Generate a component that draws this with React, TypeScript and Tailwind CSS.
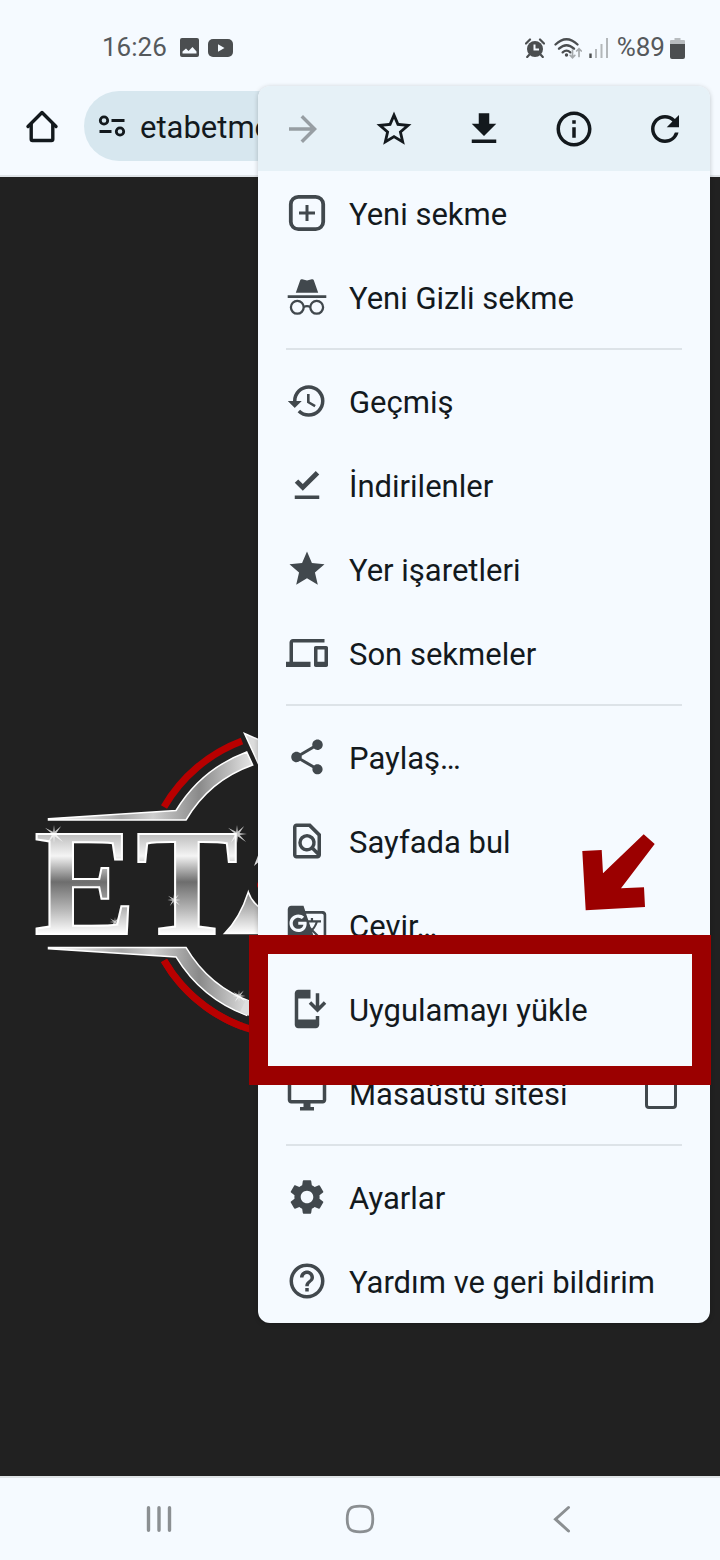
import type { ReactNode } from 'react';
import {
  MdArrowForward,
  MdDevices,
  MdGTranslate,
  MdHelpOutline,
  MdHistory,
  MdInfoOutline,
  MdInstallMobile,
  MdOutlineDesktopWindows,
  MdOutlineFindInPage,
  MdRefresh,
  MdSettings,
  MdShare,
  MdStar,
  MdStarBorder,
} from 'react-icons/md';

function DownloadIcon() {
  return (
    <svg viewBox="0 0 24 24" className="size-[42px]" fill="currentColor">
      <path d="M19 9h-4V3H9v6H5l7 7 7-7zM5 18v2h14v-2H5z" />
    </svg>
  );
}

function DownloadDoneIcon() {
  return (
    <svg viewBox="0 0 24 24" className="size-[42px]" fill="currentColor">
      <path d="M5 18h14v2H5v-2zm4.6-2.7L5 10.7l2-1.9 2.6 2.6L17 4l2 2-9.4 9.3z" />
    </svg>
  );
}

function NewTabIcon() {
  return (
    <svg viewBox="0 0 42 42" className="size-[42px]" fill="none" stroke="currentColor">
      <rect x="4.8" y="4.8" width="32.4" height="32.4" rx="7.5" strokeWidth="3.8" />
      <path d="M21 13v16M13 21h16" strokeWidth="3" />
    </svg>
  );
}

function IncognitoIcon() {
  return (
    <svg viewBox="0 0 42 42" className="size-[42px]" fill="none" stroke="currentColor">
      <path d="M9.8 16.8 14.2 4.3q.5-1.4 2-1l4.8 1.3 4.8-1.3q1.5-.4 2 1l4.4 12.5z" fill="currentColor" stroke="none" />
      <path d="M1.7 20.6h38.6" strokeWidth="2.8" />
      <circle cx="11.3" cy="31.3" r="6.4" strokeWidth="2.3" />
      <circle cx="30.7" cy="31.3" r="6.4" strokeWidth="2.3" />
      <path d="M17.5 31q3.5-1.6 7 0" strokeWidth="2.3" />
    </svg>
  );
}

const toolbar: { label: string; icon: ReactNode; disabled?: boolean }[] = [
  { label: 'İleri', icon: <MdArrowForward size={42} />, disabled: true },
  { label: 'Yer işareti ekle', icon: <MdStarBorder size={42} /> },
  { label: 'İndir', icon: <DownloadIcon /> },
  { label: 'Sayfa bilgisi', icon: <MdInfoOutline size={42} /> },
  { label: 'Yenile', icon: <MdRefresh size={42} /> },
];

type Item = { label: string; icon: ReactNode; checkbox?: boolean; highlighted?: boolean };

const groups: Item[][] = [
  [
    { label: 'Yeni sekme', icon: <NewTabIcon /> },
    { label: 'Yeni Gizli sekme', icon: <IncognitoIcon /> },
  ],
  [
    { label: 'Geçmiş', icon: <MdHistory size={42} /> },
    { label: 'İndirilenler', icon: <DownloadDoneIcon /> },
    { label: 'Yer işaretleri', icon: <MdStar size={42} /> },
    { label: 'Son sekmeler', icon: <MdDevices size={42} /> },
  ],
  [
    { label: 'Paylaş…', icon: <MdShare size={42} /> },
    { label: 'Sayfada bul', icon: <MdOutlineFindInPage size={42} /> },
    { label: 'Çevir…', icon: <MdGTranslate size={42} /> },
    { label: 'Uygulamayı yükle', icon: <MdInstallMobile size={42} />, highlighted: true },
    { label: 'Masaüstü sitesi', icon: <MdOutlineDesktopWindows size={42} />, checkbox: true },
  ],
  [
    { label: 'Ayarlar', icon: <MdSettings size={42} /> },
    { label: 'Yardım ve geri bildirim', icon: <MdHelpOutline size={42} /> },
  ],
];

function Highlight() {
  return (
    <div className="pointer-events-none absolute -top-8 -right-px -bottom-[34px] -left-[9px] z-10 border-[19px] border-[#9b0000]">
      <svg viewBox="582 834 74 78" className="absolute right-9 bottom-full mb-[42px] h-[78px] w-[74px]" fill="#9b0000">
        <path d="M643.7 834.3 654.7 844 621 888.3 644 887.3 645 907 585.7 910.3 582.3 851 601.7 850 603 873.3z" />
      </svg>
    </div>
  );
}

function MenuRow({ item }: { item: Item }) {
  const row = 'flex h-[84px] w-full items-center gap-[21px] px-7 text-left';
  const content = (
    <>
      <span className="shrink-0 text-[#41484d]">{item.icon}</span>
      <span className="flex-1 pt-1 whitespace-nowrap">{item.label}</span>
    </>
  );

  return (
    <li className="relative">
      {item.checkbox ? (
        <label className={row}>
          {content}
          <input type="checkbox" className="mr-[5px] size-8 appearance-none rounded-sm border-3 border-[#41484d]" />
        </label>
      ) : (
        <button type="button" className={row}>
          {content}
        </button>
      )}
      {item.highlighted && <Highlight />}
    </li>
  );
}

function Menu() {
  return (
    <div className="absolute top-[86px] right-2.5 w-[452px] rounded-xl bg-[#f5faff] text-[31px] text-[#13191d] shadow-[0_1px_5px_rgba(0,0,0,0.22)]">
      <div className="grid h-[85px] grid-cols-5 rounded-t-xl bg-[#e6f1f7]">
        {toolbar.map((action) => (
          <button
            key={action.label}
            type="button"
            aria-label={action.label}
            disabled={action.disabled}
            className="flex items-center justify-center disabled:text-[#979ea3]"
          >
            {action.icon}
          </button>
        ))}
      </div>
      {groups.map((group, i) => (
        <div key={i}>
          {i > 0 && <hr className="mx-7 my-[9px] border-t-2 border-[#dde3e8]" />}
          <ul>
            {group.map((item) => (
              <MenuRow key={item.label} item={item} />
            ))}
          </ul>
        </div>
      ))}
    </div>
  );
}

function StatusBar() {
  return (
    <div className="flex h-[91px] items-center pt-1 pr-[35px] pl-[102px] text-[26px] text-[#55595c]">
      <span>16:26</span>
      <svg viewBox="0 0 19 19" className="ml-[13px] size-[19px]">
        <rect width="19" height="19" rx="2" fill="#4b4e50" />
        <path d="M2.5 15.5v-2l3.5-3 2.5 2.5L12.500 9l4 4.500v2z" fill="#f5faff" />
      </svg>
      <svg viewBox="0 0 25 18" className="ml-[9px] h-[18px] w-[25px]">
        <rect width="25" height="18" rx="5" fill="#4b4e50" />
        <path d="M10 5.3 16.5 9 10 12.7z" fill="#f5faff" />
      </svg>

      <div className="ml-auto flex items-center">
        <svg viewBox="0 0 20 20" className="size-5" fill="#4b4e50">
          <circle cx="10" cy="11" r="8" />
          <path d="M1 5.5 5 1.5M19 5.5 15 1.5M4 17l-1.800 2M16 17l1.800 2" stroke="#4b4e50" strokeWidth="2.2" strokeLinecap="round" />
          <path d="M9.5 6.5v5h4.5" fill="none" stroke="#f5faff" strokeWidth="2" />
        </svg>
        <svg viewBox="0 0 28 22" className="ml-[9px] h-[22px] w-7" fill="none" strokeLinecap="round">
          <path d="M1.5 7.5q11-10.5 22 0M5 11.700q7.500-7 15 0M8.700 15.400q3.800-3.500 7.600 0" stroke="#4b4e50" strokeWidth="2.3" />
          <circle cx="12.5" cy="18" r="1.7" fill="#4b4e50" />
          <path d="M18.5 13v7.500M16.200 18.400l2.300 2.300 2.300-2.300M25 19.500V12M22.700 14l2.300-2.300 2.300 2.300" stroke="#a6aaad" strokeWidth="1.7" />
        </svg>
        <svg viewBox="0 0 19 20" className="ml-[7px] h-5 w-[19px]">
          <path d="M1.5 20v-4.500" stroke="#4b4e50" strokeWidth="2.4" />
          <path d="M7 20V11M12.500 20V6M18 20V0" stroke="#b3b7ba" strokeWidth="2" />
        </svg>
        <span className="ml-[9px]">%89</span>
        <svg viewBox="0 0 15 22" className="ml-[5px] h-[22px] w-[15px]">
          <path d="M4.5 1h6v2H14q1 0 1 1v4H0V4q0-1 1-1h3.500z" fill="#b8bcbf" />
          <path d="M0 7h15v13q0 2-2 2H2q-2 0-2-2z" fill="#4b4e50" />
        </svg>
      </div>
    </div>
  );
}

function AddressBar() {
  return (
    <div className="flex h-[84px] items-start pr-6 pl-[22px] text-[#13191d]">
      <button type="button" aria-label="Ana sayfa" className="mt-[15px] shrink-0">
        <svg viewBox="0 0 40 40" className="size-10" fill="none" stroke="currentColor" strokeWidth="3.4" strokeLinejoin="round">
          <path d="M6 20.5 20 6.500 34 20.500" strokeLinecap="round" />
          <path d="M9.2 18v15.200q0 1.300 1.300 1.300h19q1.300 0 1.300-1.300V18" />
        </svg>
      </button>
      <div className="ml-[22px] flex h-[70px] flex-1 items-center gap-[13px] rounded-full bg-[#d7e7ef] pl-3.5">
        <svg viewBox="0 0 29 24" className="h-6 w-[29px] shrink-0" fill="none" stroke="currentColor" strokeWidth="2.8">
          <circle cx="6" cy="6.5" r="3.7" />
          <path d="M13.5 6.5h13M1.5 17.5h12" />
          <circle cx="22" cy="17.5" r="3.7" />
        </svg>
        <input
          type="text"
          aria-label="Adres"
          defaultValue="etabetmo"
          className="min-w-0 flex-1 bg-transparent pt-1 text-[31px] outline-none"
        />
      </div>
    </div>
  );
}

function Sparkle({ x, y, r }: { x: number; y: number; r: number }) {
  return (
    <g transform={`translate(${x} ${y}) scale(${r})`} fill="#fff" opacity="0.75">
      <path d="M0-.2.8-.9.2 0 1 .9 0 .2-.7 1-.2 0-1-.7z" />
      <path d="M-1.1 0 0-.15 1.1 0 0 .15zM0-1 .12 0 0 1-.12 0z" />
    </g>
  );
}

function Wing() {
  return (
    <>
      <path
        d="M48.5 818.7 176 810.5A140.5 140.5 0 0 1 246.7 752L252.700 765A126 126 0 0 0 186 820H48.500z"
        fill="url(#wing)"
        stroke="#fff"
        strokeWidth="1.5"
      />
      <path d="M164 807A152 152 0 0 1 242 741" fill="none" stroke="#b80000" strokeWidth="7" />
    </>
  );
}

function Logo() {
  return (
    <svg viewBox="0 725 720 320" className="w-full">
      <defs>
        <linearGradient id="metal" gradientUnits="userSpaceOnUse" x1="0" y1="834" x2="0" y2="934">
          <stop offset="0" stopColor="#bdbdbd" />
          <stop offset="0.22" stopColor="#f4f4f4" />
          <stop offset="0.48" stopColor="#6d6d6d" />
          <stop offset="0.75" stopColor="#b5b5b5" />
          <stop offset="1" stopColor="#ffffff" />
        </linearGradient>
        <linearGradient id="wing" gradientUnits="userSpaceOnUse" x1="48" y1="0" x2="258" y2="0">
          <stop offset="0" stopColor="#ffffff" />
          <stop offset="0.35" stopColor="#a8a8a8" />
          <stop offset="0.5" stopColor="#cfcfcf" />
          <stop offset="0.72" stopColor="#8a8a8a" />
          <stop offset="1" stopColor="#efefef" />
        </linearGradient>
      </defs>
      <Wing />
      <path d="M244.5 733.5 264 742v34z" fill="#dcdcdc" stroke="#fff" strokeWidth="1.5" />
      <g transform="translate(0 1767.4) scale(1 -1)">
        <Wing />
        <path d="M164 807A152 152 0 0 1 262 735" fill="none" stroke="#b80000" strokeWidth="7" />
        <path d="M240 755.5 262 746v15L246 768z" fill="#dedede" />
      </g>
      <g
        fontFamily="Liberation Serif, serif"
        fontWeight="700"
        fontSize="153"
        fill="url(#metal)"
        stroke="#fff"
        strokeWidth="2"
      >
        <text x="34" y="934">E</text>
        <text x="136" y="934">T</text>
      </g>
      {/* left points of the star that stands between the letters */}
      <path d="M224.5 933.5Q240 918 248.3 892 252 903 262 909v24.500z" fill="url(#metal)" stroke="#fff" strokeWidth="1.5" />
      <path d="M254 866 262 845v14z" fill="#eee" />
      <circle cx="262" cy="885" r="5" fill="#b80000" />
      <Sparkle x={54} y={834} r={9} />
      <Sparkle x={237} y={834} r={9} />
      <Sparkle x={174} y={900} r={6} />
      <Sparkle x={115} y={922} r={5} />
      <Sparkle x={239} y={996} r={6} />
    </svg>
  );
}

function NavBar() {
  return (
    <nav className="grid h-[84px] grid-cols-3 border-t-2 border-[#dfe4e6] px-[58px] text-[#8b8f92]">
      <button type="button" aria-label="Son uygulamalar" className="flex items-center justify-center">
        <svg viewBox="0 0 28 30" className="h-[30px] w-7" stroke="currentColor" strokeWidth="3.4" strokeLinecap="round">
          <path d="M3.5 3.7v22.600M14 3.700v22.600M24.500 3.700v22.600" />
        </svg>
      </button>
      <button type="button" aria-label="Ana ekran" className="flex items-center justify-center">
        <svg viewBox="0 0 30 30" className="size-[30px]" fill="none" stroke="currentColor" strokeWidth="2.8">
          <path d="M15 2.2c9.500 0 12.800 2.300 12.800 12.800S24.500 27.800 15 27.800 2.200 25.500 2.200 15 5.500 2.200 15 2.200z" />
        </svg>
      </button>
      <button type="button" aria-label="Geri" className="flex items-center justify-center">
        <svg viewBox="0 0 30 30" className="size-[30px]" fill="none" stroke="currentColor" strokeWidth="3" strokeLinecap="round">
          <path d="M22.5 3.5 9.5 15.200l13 11.800" />
        </svg>
      </button>
    </nav>
  );
}

export default function App() {
  return (
    <div className="relative flex min-h-screen flex-col overflow-hidden bg-[#f5faff] font-[Roboto,sans-serif]">
      <header className="border-b-2 border-[#dfe4e8]">
        <StatusBar />
        <AddressBar />
      </header>
      <main className="flex-1 bg-[#212121] pt-[548px]">
        <Logo />
      </main>
      <NavBar />
      <Menu />
    </div>
  );
}
